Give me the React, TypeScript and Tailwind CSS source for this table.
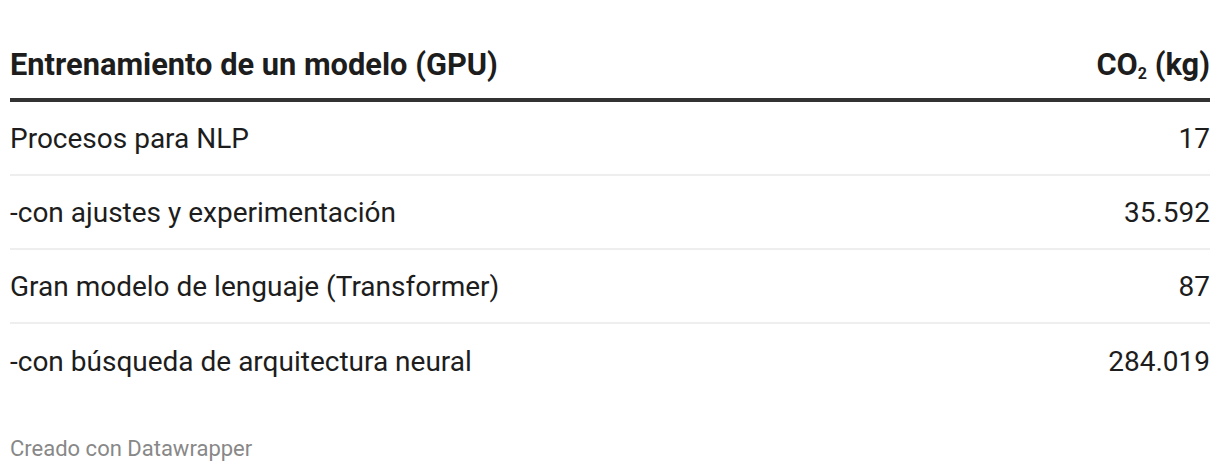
const rows = [
  { label: "Procesos para NLP", value: "17" },
  { label: "-con ajustes y experimentación", value: "35.592" },
  { label: "Gran modelo de lenguaje (Transformer)", value: "87" },
  { label: "-con búsqueda de arquitectura neural", value: "284.019" },
];

export default function App() {
  return (
    <div className="w-[1220px] h-[472px] bg-white px-[10px] font-['Roboto',sans-serif] text-[#1d1d1d]">
      <div className="flex h-[102px] items-center justify-between border-b-4 border-[#333333] pt-[32px] text-[30.8px] font-bold leading-[36px]">
        <span>Entrenamiento de un modelo (GPU)</span>
        <span>
          CO<sub className="relative top-[4px] text-[16px]">2</sub> (kg)
        </span>
      </div>
      {rows.map((r, i) => (
        <div
          key={r.label}
          className={
            i < rows.length - 1
              ? "flex h-[74px] items-center justify-between border-b-2 border-[#eeeeee] pt-[2px] text-[28px]"
              : "flex h-[74px] items-center justify-between pt-[2px] text-[28px]"
          }
        >
          <span>{r.label}</span>
          <span>{r.value}</span>
        </div>
      ))}
      <div className="pt-[38px] text-[22px] leading-[26px] text-[#888888]">Creado con Datawrapper</div>
    </div>
  );
}
